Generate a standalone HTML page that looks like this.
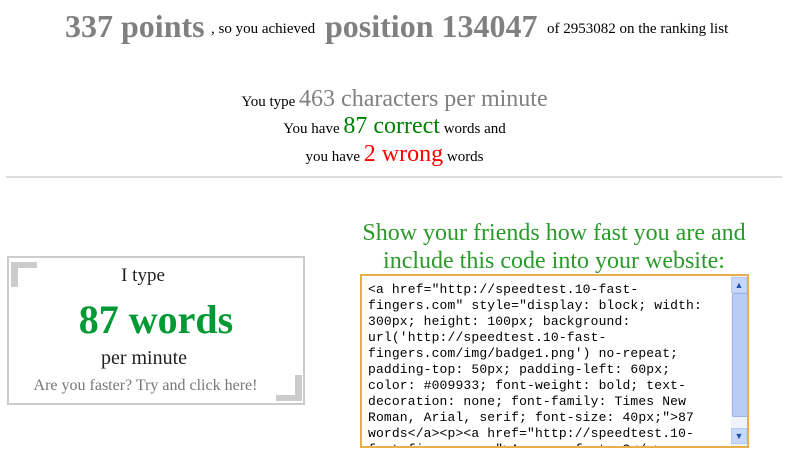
<!DOCTYPE html>
<html><head><style>
body{margin:0;width:789px;height:456px;background:#fff;font-family:"Liberation Serif",serif;position:relative;overflow:hidden}
.a{position:absolute;white-space:nowrap}
.ta{position:absolute;left:360px;top:274px;width:385px;height:170px;border:2px solid #e8b04a;overflow:hidden;background:#fff}
.code{position:absolute;left:6px;top:6px;font:13px/16px "Liberation Mono",monospace;letter-spacing:0.15px;color:#000;white-space:pre}
.sb{position:absolute;right:0;top:0;width:16px;height:100%;background:#f0f3fb}
</style></head><body>
<div class="a" style="left:65px;top:8px;color:#808080;font-size:32px;font-weight:bold">337 points</div>
<div class="a" style="left:211px;top:21px;font-size:15px">, so you achieved</div>
<div class="a" style="left:325px;top:8px;color:#808080;font-size:32px;font-weight:bold">position 134047</div>
<div class="a" style="left:547px;top:21px;font-size:15px">of 2953082 on the ranking list</div>

<div class="a" style="left:0;width:789px;text-align:center;top:86px;font-size:15px">You type <span style="color:#808080;font-size:24px">463 characters per minute</span></div>
<div class="a" style="left:0;width:789px;text-align:center;top:113px;font-size:15px">You have <span style="color:#008000;font-size:24px">87 correct</span> words and</div>
<div class="a" style="left:0;width:789px;text-align:center;top:141px;font-size:15px">you have <span style="color:#ff0000;font-size:24px">2 wrong</span> words</div>
<div class="a" style="left:6px;top:176px;width:776px;height:2px;background:#ddd"></div>

<div class="a" style="left:340px;width:428px;text-align:center;top:219px;color:#2a9a2a;font-size:24px;line-height:28px">Show your friends how fast you are and<br>include this code into your website:</div>

<div class="a" style="left:7px;top:256px;width:294px;height:145px;border:2px solid #ccc"></div>
<div class="a" style="left:11px;top:262px;width:26px;height:6px;background:#ccc"></div>
<div class="a" style="left:11px;top:262px;width:7px;height:25px;background:#ccc"></div>
<div class="a" style="left:276px;top:395px;width:26px;height:6px;background:#ccc"></div>
<div class="a" style="left:295px;top:375px;width:7px;height:26px;background:#ccc"></div>
<div class="a" style="left:0;width:286px;text-align:center;top:265px;font-size:19px;color:#222">I type</div>
<div class="a" style="left:7px;width:298px;text-align:center;top:296px;font-size:40px;font-weight:bold;color:#009933">87 words</div>
<div class="a" style="left:0;width:288px;text-align:center;top:347px;font-size:20px;color:#222">per minute</div>
<div class="a" style="left:0;width:291px;text-align:center;top:377px;font-size:16px;color:#777">Are you faster? Try and click here!</div>

<div class="ta"><div class="code">&lt;a href="http://speedtest.10-fast-
fingers.com" style="display: block; width:
300px; height: 100px; background:
url('http://speedtest.10-fast-
fingers.com/img/badge1.png') no-repeat;
padding-top: 50px; padding-left: 60px;
color: #009933; font-weight: bold; text-
decoration: none; font-family: Times New
Roman, Arial, serif; font-size: 40px;"&gt;87
words&lt;/a&gt;&lt;p&gt;&lt;a href="http://speedtest.10-
fast-fingers.com"&gt;Are you faster?&lt;/a&gt;</div>
<div class="sb">
<div style="position:absolute;left:0;top:1px;width:14px;height:14px;border:1px solid #b8c8f0;background:#c8d8fa;color:#2050b0;font:9px/14px sans-serif;text-align:center">▲</div>
<div style="position:absolute;left:1px;top:17px;width:14px;height:122px;border:1px solid #9cb4e8;background:#b8ccf7;border-radius:2px"></div>
<div style="position:absolute;left:0;top:152px;width:14px;height:14px;border:1px solid #b8c8f0;background:#c8d8fa;color:#2050b0;font:9px/14px sans-serif;text-align:center">▼</div>
</div></div>
</body></html>
